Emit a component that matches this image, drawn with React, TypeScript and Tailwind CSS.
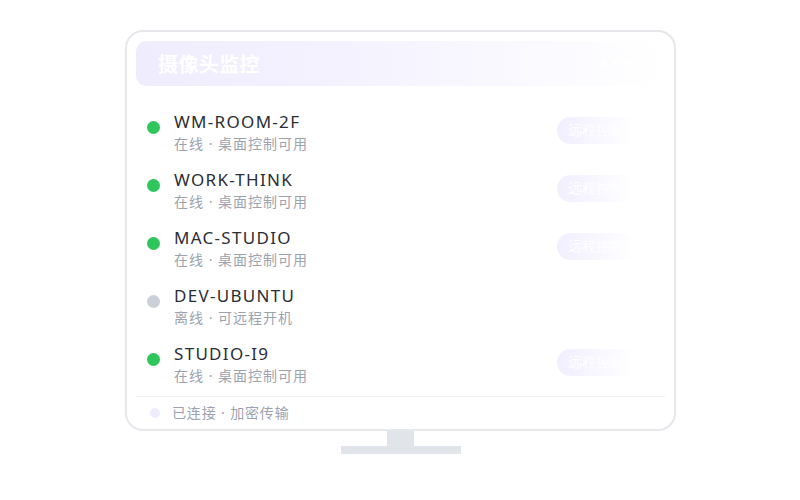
import React from "react";

const devices = [
  { name: "WM-ROOM-2F", online: true },
  { name: "WORK-THINK", online: true },
  { name: "MAC-STUDIO", online: true },
  { name: "DEV-UBUNTU", online: false },
  { name: "STUDIO-I9", online: true },
];

export default function App() {
  return (
    <div
      className="w-[800px] h-[500px] bg-white overflow-hidden"
      style={{ fontFamily: '"Noto Sans", "Noto Sans CJK SC", sans-serif' }}
    >
      <div className="ml-[125px] mt-[30px] w-[551px] flex flex-col items-center">
        <div className="w-[551px] h-[401px] border-2 border-[#e5e7eb] rounded-[18px] px-[9px] pt-[9px] flex flex-col">
          <div className="h-[45px] rounded-[10px] bg-gradient-to-r from-[#efecfe] via-[#f6f4ff] to-white flex items-center justify-between pl-[22px] pr-[36px]">
            <span className="text-white text-[20px] font-bold mt-[3px] tracking-[0.4px]">摄像头监控</span>
            <div className="flex gap-[6px] items-center">
              <span className="w-[5px] h-[5px] rounded-full bg-white"></span>
              <span className="w-[5px] h-[5px] rounded-full bg-white"></span>
              <span className="w-[5px] h-[5px] rounded-full bg-white"></span>
            </div>
          </div>
          <div className="mt-[18px] flex flex-col">
            {devices.map((d) => (
              <div key={d.name} className="h-[58px] flex items-start">
                <span
                  className={
                    "ml-[11px] mt-[17px] w-[13px] h-[13px] rounded-full shrink-0 " +
                    (d.online ? "bg-[#2ec55a]" : "bg-[#cbd0d8]")
                  }
                ></span>
                <div className="ml-[14px] pt-[7px] flex flex-col">
                  <span className="text-[17px] leading-[22px] text-[#2a2e36] tracking-[1.3px]">{d.name}</span>
                  <span className="text-[14px] leading-[20px] text-[#9ca3af] mt-[1px] tracking-[1px]">
                    {d.online ? "在线 · 桌面控制可用" : "离线 · 可远程开机"}
                  </span>
                </div>
                {d.online && (
                  <div className="ml-auto mr-[30px] mt-[13px] w-[78px] h-[27px] rounded-full bg-gradient-to-r from-[#f1eeff] to-white flex items-center pl-[11px]">
                    <span className="text-white text-[14px] font-serif">远程控制</span>
                  </div>
                )}
              </div>
            ))}
          </div>
          <div className="mt-[2px] border-t border-[#eef0f3] flex items-center h-[32px]">
            <span className="ml-[14px] w-[10px] h-[10px] rounded-full bg-[#efecfe]"></span>
            <span className="ml-[12px] text-[14px] text-[#9ca3af] tracking-[0.85px]">已连接 · 加密传输</span>
          </div>
        </div>
        <div className="w-[27px] h-[15px] bg-[#e1e5ea]"></div>
        <div className="w-[120px] h-[8px] bg-[#e1e5ea]"></div>
      </div>
    </div>
  );
}
